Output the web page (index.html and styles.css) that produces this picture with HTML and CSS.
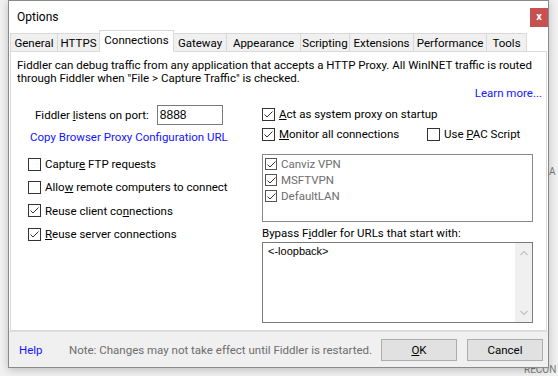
FILE: index.html
```html
<!DOCTYPE html>
<html>
<head>
<meta charset="utf-8">
<link rel="stylesheet" href="styles.css">
</head>
<body>
<span class="behind behind-recon">RECON</span>
<span class="behind behind-ap">A</span>
<div class="dialog">
  <div class="titlebar">
    <span class="title">Options</span>
    <span class="close">x</span>
  </div>
  <div class="tabs">
    <span class="tab w-general">General</span>
    <span class="tab w-https">HTTPS</span>
    <span class="tab tab-active w-conn">Connections</span>
    <span class="tab w-gateway">Gateway</span>
    <span class="tab w-appearance">Appearance</span>
    <span class="tab w-scripting">Scripting</span>
    <span class="tab w-extensions">Extensions</span>
    <span class="tab w-performance">Performance</span>
    <span class="tab w-tools">Tools</span>
  </div>
  <div class="panel">
    <p class="desc">Fiddler can debug traffic from any application that accepts a HTTP Proxy. All WinINET traffic is routed<br>through Fiddler when "File &gt; Capture Traffic" is checked.</p>
    <div class="learn"><a class="link">Learn more...</a></div>
    <div class="cols">
      <div class="col-left">
        <div class="port-row">
          <span>Fiddler <u>l</u>istens on port:</span>
          <span class="input">8888</span>
        </div>
        <a class="link copy-link">Copy Browser Proxy Configuration URL</a>
        <div class="checks">
          <label class="cb"><span class="box"></span><span>Captur<u>e</u> FTP requests</span></label>
          <label class="cb"><span class="box"></span><span>Allo<u>w</u> remote computers to connect</span></label>
          <label class="cb"><span class="box"><svg viewBox="0 0 13 13" width="13" height="13"><polyline points="2.5,6.5 5,9 10.5,3.5" fill="none" stroke="#333" stroke-width="1"/></svg></span><span>Reuse client co<u>n</u>nections</span></label>
          <label class="cb"><span class="box"><svg viewBox="0 0 13 13" width="13" height="13"><polyline points="2.5,6.5 5,9 10.5,3.5" fill="none" stroke="#333" stroke-width="1"/></svg></span><span><u>R</u>euse server connections</span></label>
        </div>
      </div>
      <div class="col-right">
        <label class="cb"><span class="box"><svg viewBox="0 0 13 13" width="13" height="13"><polyline points="2.5,6.5 5,9 10.5,3.5" fill="none" stroke="#333" stroke-width="1"/></svg></span><span><u>A</u>ct as system proxy on startup</span></label>
        <div class="monitor-row">
          <label class="cb cb-monitor"><span class="box"><svg viewBox="0 0 13 13" width="13" height="13"><polyline points="2.5,6.5 5,9 10.5,3.5" fill="none" stroke="#333" stroke-width="1"/></svg></span><span><u>M</u>onitor all connections</span></label>
          <label class="cb"><span class="box"></span><span>Use <u>P</u>AC Script</span></label>
        </div>
        <div class="listbox">
          <div class="li"><span class="box box-dis"><svg viewBox="0 0 13 13" width="13" height="13"><polyline points="2.5,6.5 5,9 10.5,3.5" fill="none" stroke="#333" stroke-width="1"/></svg></span>Canviz VPN</div>
          <div class="li"><span class="box box-dis"><svg viewBox="0 0 13 13" width="13" height="13"><polyline points="2.5,6.5 5,9 10.5,3.5" fill="none" stroke="#333" stroke-width="1"/></svg></span>MSFTVPN</div>
          <div class="li"><span class="box box-dis"><svg viewBox="0 0 13 13" width="13" height="13"><polyline points="2.5,6.5 5,9 10.5,3.5" fill="none" stroke="#333" stroke-width="1"/></svg></span>DefaultLAN</div>
        </div>
        <div class="bypass-label">Bypass F<u>i</u>ddler for URLs that start with:</div>
        <div class="textarea">
          <div class="ta-text">&lt;-loopback&gt;</div>
          <div class="scrollbar">
            <svg viewBox="0 0 16 10" width="16" height="10"><polyline points="4.5,7 8,3.5 11.5,7" fill="none" stroke="#c2c2c2" stroke-width="1.2"/></svg>
            <svg viewBox="0 0 16 10" width="16" height="10"><polyline points="4.5,3 8,6.5 11.5,3" fill="none" stroke="#c2c2c2" stroke-width="1.2"/></svg>
          </div>
        </div>
      </div>
    </div>
  </div>
  <div class="footer">
    <a class="link help">Help</a>
    <span class="note">Note: Changes may not take effect until Fiddler is restarted.</span>
    <span class="btn btn-ok"><u>O</u>K</span>
    <span class="btn">Cancel</span>
  </div>
</div>
</body>
</html>
```

FILE: styles.css
```css
* { box-sizing: border-box; }
html, body {
  margin: 0;
  width: 558px;
  height: 376px;
  overflow: hidden;
}
body {
  background: #f1f1f1;
  font-family: Roboto, "Noto Sans", sans-serif;
  font-size: 11.5px;
  color: #000;
  position: relative;
}
.behind {
  position: absolute;
  color: #7a7a7a;
  font-size: 10px;
  z-index: 0;
  white-space: nowrap;
}
.behind-recon { left: 524px; top: 364px; }
.behind-ap { left: 549px; top: 166px; }
.dialog {
  position: relative;
  z-index: 1;
  margin-left: 8px;
  width: 541px;
  height: 368px;
  background: #fff;
  border: 1px solid #8a8a8a;
  box-shadow: 0 2px 8px rgba(0,0,0,0.22);
  display: flex;
  flex-direction: column;
}
.titlebar {
  height: 30px;
  display: flex;
  justify-content: space-between;
  align-items: flex-start;
}
.title {
  font-size: 12px;
  margin: 9px 0 0 8px;
}
.close {
  margin-top: 7px;
  width: 18px;
  height: 19px;
  background: #c75050;
  color: #fff;
  font-weight: bold;
  font-size: 11px;
  line-height: 18px;
  text-align: center;
}
.tabs {
  display: flex;
  height: 20px;
  padding-left: 1px;
  align-items: flex-end;
  position: relative;
  z-index: 2;
}
.tab {
  height: 19px;
  margin-bottom: -1px;
  background: #f0f0f0;
  border: 1px solid #d9d9d9;
  border-left-width: 0;
  text-align: center;
  line-height: 18px;
  white-space: nowrap;
}
.tab:first-child { border-left-width: 1px; }
.tab-active {
  height: 22px;
  background: #fff;
  border-left-width: 1px;
  border-bottom-color: #fff;
  margin-left: -1px;
  line-height: 18px;
}
.w-general { width: 48px; }
.w-https { width: 42px; }
.w-conn { width: 75px; }
.w-gateway { width: 53px; }
.w-appearance { width: 74px; }
.w-scripting { width: 49px; }
.w-extensions { width: 64px; }
.w-performance { width: 73px; }
.w-tools { width: 40px; }
.panel {
  margin: 0 1px 0 1px;
  height: 280px;
  border: 1px solid #d9d9d9;
  padding: 7px 4px 0 6px;
}
.desc {
  margin: 0;
  line-height: 13px;
  white-space: nowrap;
}
.learn {
  text-align: right;
  line-height: 13px;
  margin-top: 2px;
}
.link { color: #1414ff; }
.cols {
  display: grid;
  grid-template-columns: 245px 1fr;
}
.col-left { display: flex; flex-direction: column; align-items: flex-start; }
.col-right { display: flex; flex-direction: column; align-items: flex-start; padding-top: 6px; }
.port-row {
  margin: 5px 0 0 18px;
  display: flex;
  align-items: center;
  gap: 8px;
}
.input {
  width: 66px;
  height: 20px;
  border: 1px solid #7a7a7a;
  font-family: "Liberation Sans", sans-serif;
  font-size: 12px;
  line-height: 18px;
  padding-left: 2px;
}
.copy-link {
  margin: 5px 0 0 13px;
  line-height: 14px;
  white-space: nowrap;
}
.checks {
  margin: 12px 0 0 11px;
  display: flex;
  flex-direction: column;
  gap: 7.4px;
}
.cb {
  display: flex;
  align-items: center;
  gap: 4px;
  height: 16px;
  white-space: nowrap;
}
.box {
  width: 13px;
  height: 13px;
  border: 1px solid #333;
  background: #fff;
  flex: none;
  position: relative;
}
.box svg { position: absolute; left: -1px; top: -1px; }
.monitor-row {
  margin-top: 4px;
  display: flex;
  width: 100%;
}
.cb-monitor { width: 165px; }
.listbox {
  margin-top: 12px;
  width: 271px;
  height: 68px;
  border: 1px solid #828790;
  padding: 1px 0 0 2px;
}
.li {
  height: 16px;
  display: flex;
  align-items: center;
  gap: 4px;
  color: #6d6d6d;
}
.box-dis { border-color: #555; width: 12px; height: 12px; }
.bypass-label {
  margin-top: 4px;
  line-height: 14px;
  white-space: nowrap;
}
.textarea {
  margin-top: 2px;
  width: 271px;
  height: 81px;
  border: 1px solid #7a7a7a;
  display: flex;
  justify-content: space-between;
}
.ta-text {
  font-family: "Liberation Sans", sans-serif;
  font-size: 11px;
  padding: 2px 0 0 5px;
}
.scrollbar {
  width: 17px;
  background: #f0f0f0;
  display: flex;
  flex-direction: column;
  justify-content: space-between;
  padding: 5px 0 4px 0;
  align-items: center;
}
.footer {
  flex: 1;
  background: #f0f0f0;
  border-top: 1px solid #dfdfdf;
  display: flex;
  align-items: center;
  padding: 0 5px 0 10px;
  white-space: nowrap;
}
.help { width: 50px; }
.note { color: #6d6d6d; flex: 1; }
.btn {
  width: 76px;
  height: 22px;
  background: #e1e1e1;
  border: 1px solid #adadad;
  text-align: center;
  line-height: 20px;
}
.btn-ok { margin-right: 10px; }
```
